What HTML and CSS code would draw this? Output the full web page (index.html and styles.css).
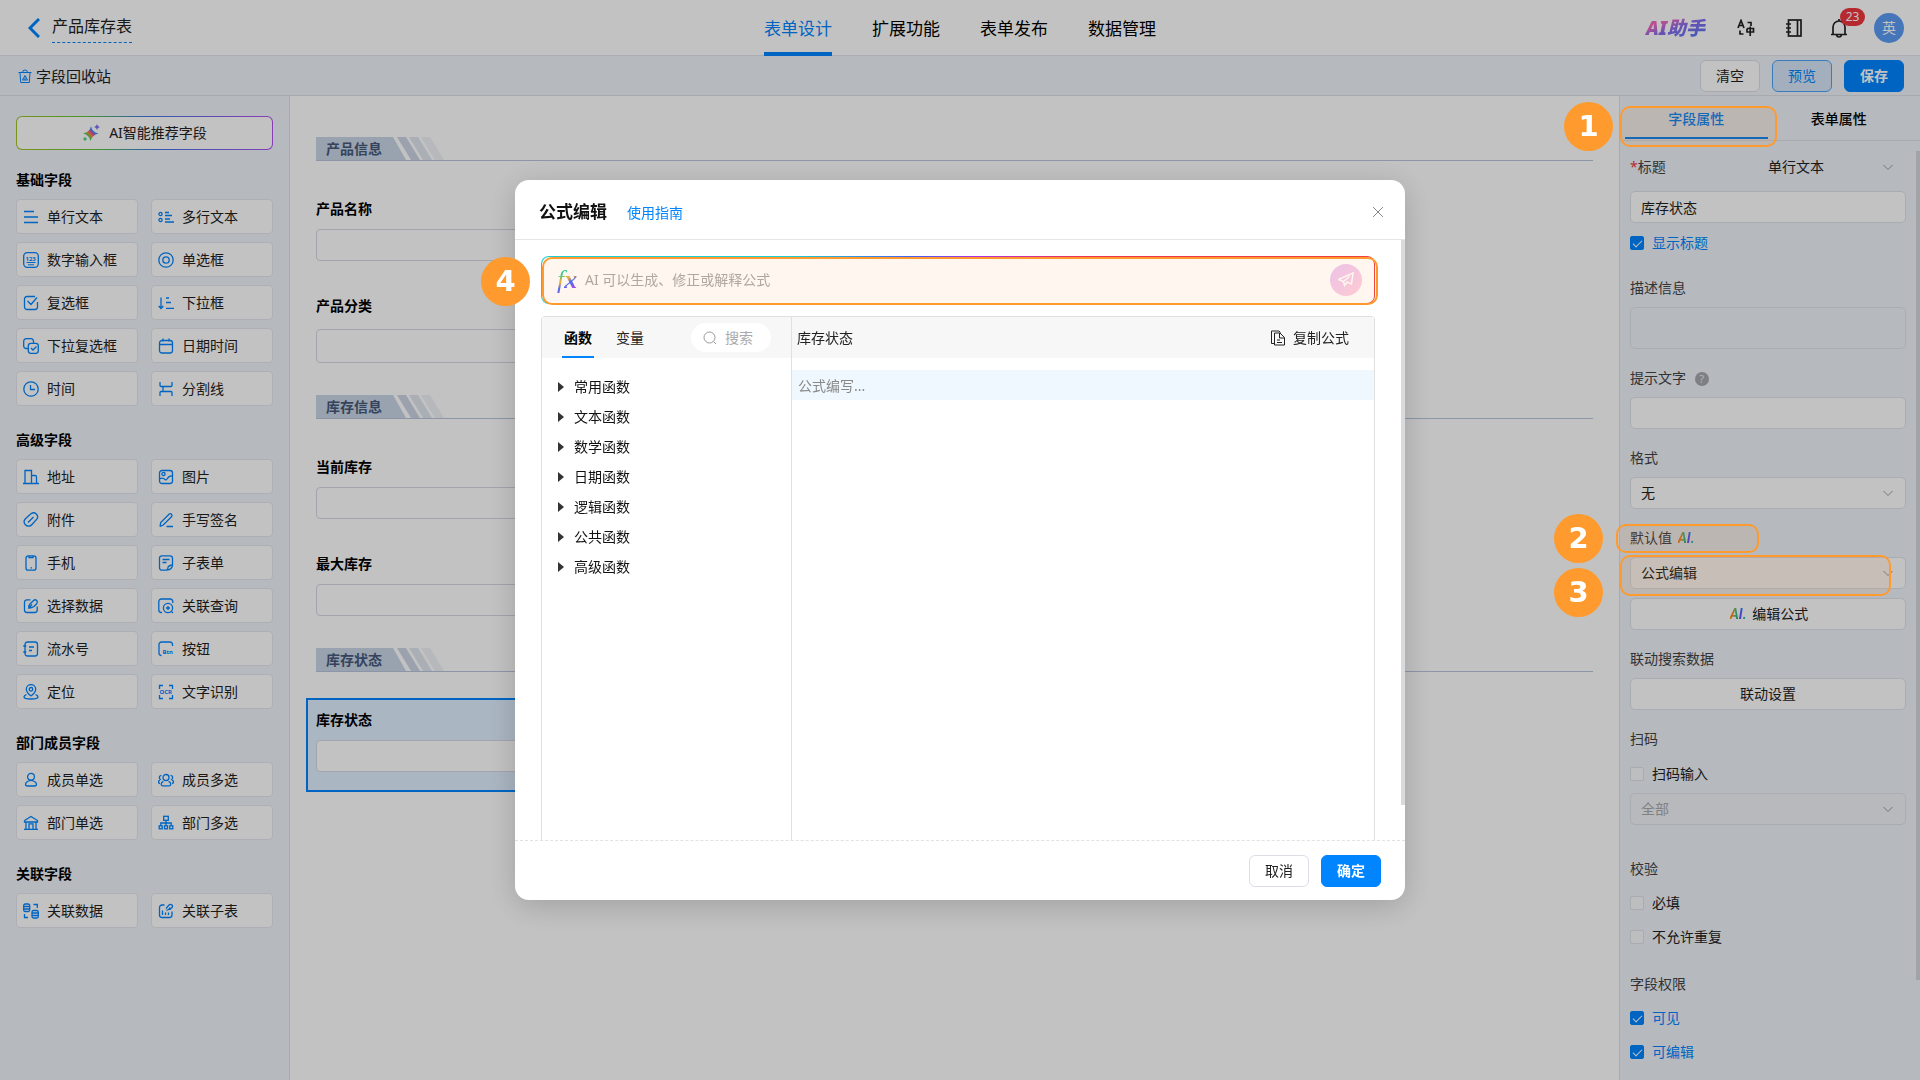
FILE: index.html
```html
<!DOCTYPE html>
<html lang="zh-CN">
<head>
    <meta charset="UTF-8">
    <meta name="viewport" content="width=device-width, initial-scale=1.0">
    <title>产品库存表 - 表单设计</title>
    <link rel="stylesheet" href="styles.css">
</head>
<body>
    <!-- Iconos compartidos -->
    <svg class="sprite" aria-hidden="true">
        <defs>
            <linearGradient id="rainbow" x1="0" y1="1" x2="1" y2="0">
                <stop offset="0" stop-color="#3ecf6b"/><stop offset=".3" stop-color="#3ecf6b"/><stop offset=".42" stop-color="#ff8a3c"/>
                <stop offset=".5" stop-color="#f0508c"/><stop offset=".6" stop-color="#3b8cff"/><stop offset="1" stop-color="#b05cf0"/>
            </linearGradient>
            <symbol id="i-line" viewBox="0 0 16 16"><path d="M1 2.5h10M1 8h14M1 13.5h14"/></symbol>
            <symbol id="i-multi" viewBox="0 0 16 16"><circle cx="2.5" cy="5" r="1.6"/><circle cx="2.5" cy="11" r="1.6"/><path d="M7 3.5h4M7 6.500h7M7 10h5M7 13h9"/></symbol>
            <symbol id="i-number" viewBox="0 0 16 16"><rect x=".7" y=".7" width="14.600" height="14.600" rx="3.500"/><text x="2.500" y="9" class="icon-text">123</text><path d="M3.500 10.500h9M5 12.800h6" stroke-width="1"/></symbol>
            <symbol id="i-radio" viewBox="0 0 16 16"><circle cx="8" cy="8" r="7.200"/><circle cx="8" cy="8" r="3.200"/></symbol>
            <symbol id="i-check" viewBox="0 0 16 16"><path d="M14.500 7v5a2.500 2.500 0 0 1-2.500 2.500H4A2.500 2.500 0 0 1 1.500 12V4A2.500 2.500 0 0 1 4 1.500h8M4.500 6l3.500 3.500 6-7"/></symbol>
            <symbol id="i-drop" viewBox="0 0 16 16"><path d="M3 2.500v11M.7 11L3 13.500 5.300 11M8 3h3M8 7.500h5M8 13.300h8"/></symbol>
            <symbol id="i-multicheck" viewBox="0 0 16 16"><path d="M5 10.500H3.200A2.500 2.500 0 0 1 .7 8V3.200A2.500 2.500 0 0 1 3.200.7H8a2.500 2.500 0 0 1 2.500 2.500V5"/><rect x="5.300" y="5.300" width="10" height="10" rx="2.500"/><path d="M8 10l2 2 3.500-3.500"/></symbol>
            <symbol id="i-date" viewBox="0 0 16 16"><rect x="1.500" y="2.500" width="13" height="12.500" rx="2.500"/><path d="M1.500 6.500h13M5 .5v3M11 .5v3"/></symbol>
            <symbol id="i-time" viewBox="0 0 16 16"><circle cx="8" cy="8" r="7.200"/><path d="M7.500 4v4.500H12"/></symbol>
            <symbol id="i-split" viewBox="0 0 16 16"><path d="M2 1v3.500q0 1 1 1h10q1 0 1-1V1M2 15v-3.500q0-1 1-1h10q1 0 1 1V15M5 5.500v5"/></symbol>
            <symbol id="i-address" viewBox="0 0 16 16"><path d="M0 14.500h16M2 14.500v-13h6.500v13M8.500 6.500H12q1.500 0 1.500 1.500v6.500"/></symbol>
            <symbol id="i-image" viewBox="0 0 16 16"><rect x="1.500" y="1.500" width="13" height="13" rx="2.500"/><circle cx="5.500" cy="5" r="1.600"/><path d="M1.500 10q3-2 5.500.5 1 1 2-.5 2-3.500 5.500-3"/></symbol>
            <symbol id="i-clip" viewBox="0 0 16 16"><path d="M6.500 3L8 1.800a4 4 0 0 1 5.800 5.400L9 12.500a4.300 4.300 0 0 1-6.800 0 4.300 4.300 0 0 1 0-5.500L6.500 3M5 10.500L10.500 5"/></symbol>
            <symbol id="i-sign" viewBox="0 0 16 16"><path d="M2 14.500l.7-4L11 2.200q1.300-1.100 2.500.1 1.100 1.200 0 2.500L5.200 13 2 14.500M8.500 14.500h6.500"/></symbol>
            <symbol id="i-phone" viewBox="0 0 16 16"><rect x="3" y=".8" width="10" height="14.400" rx="2.200"/><path d="M6 1v1.500h4V1M7.500 12.800h1.500"/></symbol>
            <symbol id="i-sub" viewBox="0 0 16 16"><path d="M8.500 15.200H4A2.500 2.500 0 0 1 1.500 12.700V3.300A2.500 2.500 0 0 1 4 .8h8a2.500 2.500 0 0 1 2.500 2.500V10q0 4.500-6 5.200 1.800-1 1.500-3 .5-1.700 4.500-2.200M4.500 4.500h7M4.500 7.500h4"/></symbol>
            <symbol id="i-pick" viewBox="0 0 16 16"><path d="M7.500 1.800H4A2.500 2.500 0 0 0 1.500 4.300V12A2.500 2.500 0 0 0 4 14.500h7.700a2.500 2.500 0 0 0 2.500-2.500V8.500M6 10q-1-2 1-4l3.500-3.500q1.700-1.400 3.200 0 1.400 1.600 0 3.200L11 8.500Q9 10 6 10l3-3.500"/></symbol>
            <symbol id="i-query" viewBox="0 0 16 16"><path d="M4 14.500H3.300A2.500 2.500 0 0 1 .8 12V3.500A2.500 2.500 0 0 1 3.300 1h9a2.500 2.500 0 0 1 2.500 2.500V5"/><circle cx="10" cy="10" r="4.600"/><path d="M8 10h4M10 8v4M13.500 13.500l1.500 1.500"/></symbol>
            <symbol id="i-serial" viewBox="0 0 16 16"><rect x="2" y="1" width="12.500" height="14" rx="2.500"/><path d="M.3 5h3M.3 11h3M6 6h5M6 9.500h3"/></symbol>
            <symbol id="i-button" viewBox="0 0 16 16"><path d="M3.500 14.500A2.500 2.500 0 0 1 1 12V3.500A2.500 2.500 0 0 1 3.500 1H12a2.500 2.500 0 0 1 2.500 2.500V5"/><text x="4.500" y="13" class="icon-text">Btn</text></symbol>
            <symbol id="i-pin" viewBox="0 0 16 16"><path d="M8 12Q3.300 8.500 3.300 5.300a4.700 4.700 0 0 1 9.400 0Q12.700 8.500 8 12"/><circle cx="8" cy="5.300" r="1.800"/><path d="M3.500 10.500Q1 11.500 1 13q0 2 7 2t7-2q0-1.500-2.500-2.500"/></symbol>
            <symbol id="i-ocr" viewBox="0 0 16 16"><path d="M1.500 5V1.500H5M11 1.500h3.500V5M1.500 11v3.500H5M11 14.500h3.500V11"/><text x="1.500" y="10.300" class="icon-text">OCR</text></symbol>
            <symbol id="i-user" viewBox="0 0 16 16"><circle cx="8" cy="4.800" r="3.400"/><path d="M5.500 9q-3 1.200-3 3.200 0 1.800 2 1.800h7q2 0 2-1.800 0-2-3-3.200-2.500-1.200-5 0"/></symbol>
            <symbol id="i-users" viewBox="0 0 16 16"><circle cx="8" cy="5.500" r="3"/><path d="M5.500 9.300q-2.500 1-2.300 3 .2 1.500 1.800 1.500h6q1.600 0 1.800-1.500.2-2-2.300-3M3.500 3.300q-2.500.3-2 3 .2.800.8 1.200Q.3 8.700.5 10.500q.2 1 1.500 1M12.500 3.300q2.500.3 2 3-.2.800-.8 1.200 2 1.200 1.800 3-.2 1-1.500 1"/></symbol>
            <symbol id="i-dept" viewBox="0 0 16 16"><path d="M1.500 5.500L8 1.500l6.500 4V7h-13V5.500M3 7v7M13 7v7M1 14.300h14M6 14V8.800h4V14"/></symbol>
            <symbol id="i-depts" viewBox="0 0 16 16"><rect x="5.700" y="1.300" width="4.600" height="4"/><path d="M8 5.500v5M2.800 10.500V8h10.400v2.500"/><rect x="1.200" y="10.800" width="3" height="3"/><rect x="6.500" y="10.800" width="3" height="3"/><rect x="11.800" y="10.800" width="3" height="3"/></symbol>
            <symbol id="i-link" viewBox="0 0 16 16"><rect x=".7" y="1" width="6" height="7.500" rx="1.500"/><path d="M.7 3.500h6M.7 6h6"/><rect x="9" y="7.500" width="6.300" height="7.500" rx="1.500"/><path d="M9 10h6.300M9 12.500h6.300M10.500 1.500h3.800V5M1.500 11v3.500H5"/></symbol>
            <symbol id="i-linksub" viewBox="0 0 16 16"><path d="M6.500 2H4A2.500 2.500 0 0 0 1.500 4.500V12A2.500 2.500 0 0 0 4 14.500h7.500A2.500 2.500 0 0 0 14 12V8.500M4.500 7.500V12M7.500 9.500V12M10.500 9.500V12M8 5.500l3-3.500q1.500-1.300 3 0 1 1.200 0 2.500l-2.500 2.300M8.500 7q2 .5 3.500-2.500"/></symbol>
            <symbol id="i-down" viewBox="0 0 12 12"><path d="M1.500 4L6 8.500 10.500 4"/></symbol>
        </defs>
    </svg>

    <header class="topbar">
        <div class="topbar-left">
            <a href="#" class="back" aria-label="返回"><svg width="12" height="20" viewBox="0 0 12 20"><path d="M11 1L2 10l9 9"/></svg></a>
            <span class="form-name">产品库存表</span>
        </div>
        <nav class="topnav">
            <a href="#" class="active">表单设计</a>
            <a href="#">扩展功能</a>
            <a href="#">表单发布</a>
            <a href="#">数据管理</a>
        </nav>
        <div class="topbar-right">
            <a href="#" class="ai-helper">AI助手</a>
            <button class="icon-btn" aria-label="语言">
                <svg width="18" height="18" viewBox="0 0 18 18"><path d="M1 9l3-7.500L7 9M2 6.500h4M10.500 3.500H14V7M3 11.500V15h3.500M10 9.500h6.500V13H10V9.500M13.200 7.500V17"/></svg>
            </button>
            <button class="icon-btn" aria-label="通讯录">
                <svg width="18" height="18" viewBox="0 0 18 18"><rect x="3.500" y="1" width="12.500" height="16"/><path d="M12.500 1v16M1 5h5M1 9h5M1 13h5"/></svg>
            </button>
            <button class="icon-btn bell" aria-label="通知">
                <svg width="18" height="20" viewBox="0 0 18 20"><path d="M1 16.500h16M3 16.500V9a6 6 0 0 1 12 0v7.500M9 1v2M6.500 17q.5 2 2.500 2t2.500-2"/></svg>
                <span class="badge">23</span>
            </button>
            <span class="avatar">英</span>
        </div>
    </header>

    <div class="toolbar">
        <a href="#" class="recycle">
            <svg width="14" height="14" viewBox="0 0 14 14"><path d="M.5 3.500h13M4.500 3.500q0-2.500 2.500-2.500t2.500 2.500M2 3.500l.7 10h8.600l.7-10M4.500 11L7 6.500 9.500 11h-5M7 8.500V11"/></svg>
            字段回收站
        </a>
        <div class="toolbar-actions">
            <button class="btn">清空</button>
            <button class="btn btn-light">预览</button>
            <button class="btn btn-primary">保存</button>
        </div>
    </div>

    <main class="workspace">
        <aside class="sidebar">
            <button class="ai-recommend">
                <svg width="18" height="18" viewBox="0 0 18 18"><path d="M9 2q1 6 7.500 7.500Q10 11 8.500 17 7.500 11 1 9.500 8 8 9 2M15 0q.4 2.600 3 3-2.600.4-3 3-.4-2.600-3-3 2.600-.4 3-3M3 12.500q.3 2.200 2.500 2.500-2.200.3-2.500 2.500Q2.700 15.300.5 15q2.200-.3 2.500-2.500"/></svg>
                AI智能推荐字段
            </button>

            <h2>基础字段</h2>
            <div class="cards">
                <button class="card"><svg><use href="#i-line"/></svg>单行文本</button>
                <button class="card"><svg><use href="#i-multi"/></svg>多行文本</button>
                <button class="card"><svg><use href="#i-number"/></svg>数字输入框</button>
                <button class="card"><svg><use href="#i-radio"/></svg>单选框</button>
                <button class="card"><svg><use href="#i-check"/></svg>复选框</button>
                <button class="card"><svg><use href="#i-drop"/></svg>下拉框</button>
                <button class="card"><svg><use href="#i-multicheck"/></svg>下拉复选框</button>
                <button class="card"><svg><use href="#i-date"/></svg>日期时间</button>
                <button class="card"><svg><use href="#i-time"/></svg>时间</button>
                <button class="card"><svg><use href="#i-split"/></svg>分割线</button>
            </div>

            <h2>高级字段</h2>
            <div class="cards">
                <button class="card"><svg><use href="#i-address"/></svg>地址</button>
                <button class="card"><svg><use href="#i-image"/></svg>图片</button>
                <button class="card"><svg><use href="#i-clip"/></svg>附件</button>
                <button class="card"><svg><use href="#i-sign"/></svg>手写签名</button>
                <button class="card"><svg><use href="#i-phone"/></svg>手机</button>
                <button class="card"><svg><use href="#i-sub"/></svg>子表单</button>
                <button class="card"><svg><use href="#i-pick"/></svg>选择数据</button>
                <button class="card"><svg><use href="#i-query"/></svg>关联查询</button>
                <button class="card"><svg><use href="#i-serial"/></svg>流水号</button>
                <button class="card"><svg><use href="#i-button"/></svg>按钮</button>
                <button class="card"><svg><use href="#i-pin"/></svg>定位</button>
                <button class="card"><svg><use href="#i-ocr"/></svg>文字识别</button>
            </div>

            <h2>部门成员字段</h2>
            <div class="cards">
                <button class="card"><svg><use href="#i-user"/></svg>成员单选</button>
                <button class="card"><svg><use href="#i-users"/></svg>成员多选</button>
                <button class="card"><svg><use href="#i-dept"/></svg>部门单选</button>
                <button class="card"><svg><use href="#i-depts"/></svg>部门多选</button>
            </div>

            <h2>关联字段</h2>
            <div class="cards">
                <button class="card"><svg><use href="#i-link"/></svg>关联数据</button>
                <button class="card"><svg><use href="#i-linksub"/></svg>关联子表</button>
            </div>
        </aside>

        <section class="canvas">
            <div class="section-head"><span>产品信息</span><i></i><i></i><i></i></div>
            <div class="field">
                <label for="f-name">产品名称</label>
                <input type="text" id="f-name">
            </div>
            <div class="field field-select">
                <label for="f-type">产品分类</label>
                <select id="f-type"><option></option></select>
            </div>

            <div class="section-head"><span>库存信息</span><i></i><i></i><i></i></div>
            <div class="field">
                <label for="f-stock">当前库存</label>
                <input type="text" id="f-stock">
            </div>
            <div class="field">
                <label for="f-max">最大库存</label>
                <input type="text" id="f-max">
            </div>

            <div class="section-head"><span>库存状态</span><i></i><i></i><i></i></div>
            <div class="field selected">
                <label for="f-status">库存状态</label>
                <input type="text" id="f-status">
            </div>
        </section>

        <aside class="props">
            <div class="props-tabs">
                <button class="active">字段属性</button>
                <button>表单属性</button>
            </div>
            <div class="props-body">
                <div class="prop prop-title">
                    <div class="title-row">
                        <label for="p-title"><em>*</em>标题</label>
                        <div class="select plain">
                            <select aria-label="字段类型"><option>单行文本</option></select>
                            <svg><use href="#i-down"/></svg>
                        </div>
                    </div>
                    <input type="text" id="p-title" value="库存状态">
                    <label class="tick"><input type="checkbox" checked>显示标题</label>
                </div>
                <div class="prop">
                    <label for="p-desc">描述信息</label>
                    <textarea id="p-desc"></textarea>
                </div>
                <div class="prop">
                    <label for="p-tip">提示文字 <span class="help">?</span></label>
                    <input type="text" id="p-tip">
                </div>
                <div class="prop">
                    <label for="p-format">格式</label>
                    <div class="select">
                        <select id="p-format"><option>无</option></select>
                        <svg><use href="#i-down"/></svg>
                    </div>
                </div>
                <div class="prop">
                    <label for="p-default">默认值 <span class="ai-mark">AI.</span></label>
                    <div class="select">
                        <select id="p-default"><option>公式编辑</option></select>
                        <svg><use href="#i-down"/></svg>
                    </div>
                    <button class="wide-btn"><span class="ai-mark">AI.</span> 编辑公式</button>
                </div>
                <div class="prop">
                    <span>联动搜索数据</span>
                    <button class="wide-btn">联动设置</button>
                </div>
                <div class="prop prop-scan">
                    <span>扫码</span>
                    <label class="tick"><input type="checkbox">扫码输入</label>
                    <div class="select disabled">
                        <select aria-label="扫码范围" disabled><option>全部</option></select>
                        <svg><use href="#i-down"/></svg>
                    </div>
                </div>
                <div class="prop prop-ticks">
                    <span>校验</span>
                    <label class="tick"><input type="checkbox">必填</label>
                    <label class="tick"><input type="checkbox">不允许重复</label>
                </div>
                <div class="prop prop-ticks">
                    <span>字段权限</span>
                    <label class="tick"><input type="checkbox" checked>可见</label>
                    <label class="tick"><input type="checkbox" checked>可编辑</label>
                </div>
            </div>
            <div class="props-scroll"></div>
        </aside>
    </main>

    <!-- Modal de edición de fórmula -->
    <div class="mask">
        <div class="modal" role="dialog" aria-label="公式编辑">
            <div class="modal-head">
                <h1>公式编辑</h1>
                <a href="#">使用指南</a>
                <button class="close" aria-label="关闭"><svg width="12" height="12" viewBox="0 0 12 12"><path d="M1 1l10 10M11 1L1 11"/></svg></button>
            </div>
            <div class="modal-body">
                <div class="ai-bar">
                    <span class="fx">f<b>x</b></span>
                    <input type="text" aria-label="AI 公式" placeholder="AI 可以生成、修正或解释公式">
                    <button class="send" aria-label="发送"><svg width="18" height="18" viewBox="0 0 18 18"><path d="M1.500 8.500L16 2l-1.500 11-4.500-2-2.500 3.500-1-4-5-2M6.500 10.500l6-5"/></svg></button>
                    <span class="mark mark-4"></span>
                </div>
                <div class="editor">
                    <div class="functions">
                        <div class="functions-head">
                            <button class="active">函数</button>
                            <button>变量</button>
                            <label class="search">
                                <svg width="14" height="14" viewBox="0 0 14 14"><circle cx="6.500" cy="6.500" r="5.500"/><path d="M10.500 10.500L13 13"/></svg>
                                <input type="text" placeholder="搜索" aria-label="搜索">
                            </label>
                        </div>
                        <ul>
                            <li>常用函数</li>
                            <li>文本函数</li>
                            <li>数学函数</li>
                            <li>日期函数</li>
                            <li>逻辑函数</li>
                            <li>公共函数</li>
                            <li>高级函数</li>
                        </ul>
                    </div>
                    <div class="code">
                        <div class="code-head">
                            <span>库存状态</span>
                            <button class="copy"><svg width="16" height="16" viewBox="0 0 16 16"><path d="M4 13.500H1.500V1H9l1.500 1.500M4.500 3H10l4.500 4.500V15h-10V3M9.500 3v5h5M7 10h3M7 12.500h5"/></svg>复制公式</button>
                        </div>
                        <input type="text" class="code-line" placeholder="公式编写..." aria-label="公式">
                    </div>
                </div>
                <div class="modal-scroll"></div>
            </div>
            <div class="modal-foot">
                <button class="btn">取消</button>
                <button class="btn btn-primary">确定</button>
            </div>
            <span class="step step-4">4</span>
        </div>
    </div>

    <!-- Pasos de la guía -->
    <div class="guide">
        <span class="mark mark-1"></span><span class="step step-1">1</span>
        <span class="mark mark-2"></span><span class="step step-2">2</span>
        <span class="mark mark-3"></span><span class="step step-3">3</span>
    </div>
</body>
</html>
```
FILE: styles.css
```css
* {
    box-sizing: border-box;
}
body {
    margin: 0;
    height: 100vh;
    display: flex;
    flex-direction: column;
    overflow: hidden;
    font-family: "Noto Sans", "Noto Sans CJK SC", sans-serif;
    font-size: 14px;
    line-height: 20px;
    color: #222;
    background-color: #fff;
}
a {
    color: inherit;
    text-decoration: none;
}
button, input, select, textarea {
    font: inherit;
    color: inherit;
    margin: 0;
    padding: 0;
    border: none;
    background: none;
    outline: none;
}
button {
    cursor: pointer;
}
svg {
    fill: none;
    stroke: currentColor;
    flex: none;
}
.sprite {
    position: absolute;
    width: 0;
    height: 0;
}

/* Cabecera */
.topbar {
    height: 56px;
    flex: none;
    display: grid;
    grid-template-columns: 1fr auto 1fr;
    border-bottom: 1px solid #e1e4ea;
}
.topbar-left {
    display: flex;
    align-items: center;
    gap: 12px;
    padding-left: 28px;
}
.back {
    display: flex;
    color: #0085ff;
}
.back svg {
    stroke-width: 3;
}
.form-name {
    padding-bottom: 3px;
    font-size: 16px;
    line-height: 26px;
    border-bottom: 1px dashed #0085ff;
}
.topnav {
    display: flex;
    gap: 40px;
    font-size: 17px;
    color: #000;
}
.topnav a {
    height: 56px;
    line-height: 58px;
}
.topnav .active {
    color: #0085ff;
    border-bottom: 4px solid #0085ff;
}
.topbar-right {
    display: flex;
    align-items: center;
    justify-content: flex-end;
    padding-right: 16px;
}
.ai-helper {
    margin-right: 30px;
    padding: 0 2px;
    font-size: 19px;
    font-weight: 900;
    font-style: italic;
    background: linear-gradient(160deg, #f06ac0 25%, #8a6cf0 50%, #5078f0);
    -webkit-background-clip: text;
    background-clip: text;
    color: transparent;
}
.icon-btn {
    position: relative;
    display: flex;
    margin-right: 30px;
}
.icon-btn svg {
    stroke-width: 1.700;
}
.icon-btn.bell {
    margin: 0 26px 0 -3px;
}
.badge {
    position: absolute;
    left: 10px;
    top: -10px;
    width: 25px;
    border-radius: 9px;
    background-color: #f0383e;
    color: #fff;
    font-size: 12px;
    line-height: 18px;
    text-align: center;
}
.avatar {
    width: 30px;
    border-radius: 50%;
    background-color: #5c9cf5;
    color: #fff;
    text-align: center;
    line-height: 30px;
}

/* Barra de acciones */
.toolbar {
    height: 40px;
    flex: none;
    display: flex;
    align-items: center;
    justify-content: space-between;
    padding: 0 16px;
    background-color: #eff3fa;
    border-bottom: 1px solid #dde0e8;
}
.recycle {
    display: flex;
    align-items: center;
    gap: 4px;
    padding-left: 2px;
    font-size: 15px;
}
.recycle svg {
    color: #0085ff;
}
.toolbar-actions {
    display: flex;
    gap: 12px;
}
.btn {
    width: 60px;
    height: 32px;
    border: 1px solid #dcdee6;
    border-radius: 6px;
    background-color: #fff;
}
.btn-light {
    color: #0085ff;
    border-color: #4aa5fa;
    background-color: #d6e6f7;
}
.btn-primary {
    color: #fff;
    font-weight: 700;
    border-color: #0085ff;
    background-color: #0085ff;
}
.workspace {
    flex: 1;
    min-height: 0;
    display: flex;
}

/* Campos disponibles */
.sidebar {
    width: 290px;
    flex: none;
    padding: 20px 16px;
    background-color: #eff3fa;
    border-right: 1px solid #dde0e8;
}
.ai-recommend {
    width: 100%;
    height: 34px;
    display: flex;
    align-items: center;
    justify-content: center;
    gap: 9px;
    border: 1px solid transparent;
    border-radius: 6px;
    background: linear-gradient(#fff, #fff) padding-box, linear-gradient(75deg, #a5c322, #5ec43c 30%, #3f78e8 52%, #b84ff0) border-box;
}
.ai-recommend svg {
    fill: url(#rainbow);
    stroke: none;
}
.sidebar h2 {
    margin: 24px 0 9px;
    font-size: 14px;
    font-weight: 700;
    line-height: 20px;
    color: #000;
}
.sidebar .ai-recommend + h2 {
    margin-top: 20px;
}
.cards {
    display: grid;
    grid-template-columns: 1fr 1fr;
    gap: 8px 13px;
}
.card {
    height: 35px;
    display: flex;
    align-items: center;
    gap: 8px;
    padding-left: 6px;
    border: 1px solid #e4e7ee;
    border-radius: 4px;
    background-color: #fff;
    white-space: nowrap;
}
.card svg {
    width: 16px;
    height: 16px;
    color: #0085ff;
    stroke-width: 1.3;
}
.icon-text {
    font-size: 6px;
    font-weight: 700;
    fill: #0085ff;
    stroke: none;
}

/* Lienzo */
.canvas {
    flex: 1;
    min-width: 0;
    padding: 29px 26px;
}
.section-head {
    height: 24px;
    margin: 12px 0 26px;
    display: flex;
    border-bottom: 1px solid #b9c6dc;
}
.section-head span {
    width: 90px;
    padding-left: 10px;
    font-weight: 700;
    line-height: 23px;
    color: #47597a;
    background-color: #c9d5e6;
    clip-path: polygon(0 0, 77px 0, 100% 100%, 0 100%);
}
.section-head i {
    width: 23px;
    margin-left: -9px;
    background-color: #ccd5e4;
    clip-path: polygon(0 0, 9px 0, 100% 100%, 14px 100%);
}
.section-head i + i {
    margin-left: -11px;
    opacity: .6;
}
.section-head i + i + i {
    opacity: .3;
}
.field {
    width: 50%;
    display: flex;
    flex-direction: column;
    gap: 9px;
    margin: 0 -10px 3px;
    padding: 9px 8px 18px;
    border: 2px solid transparent;
}
.field label {
    font-weight: 700;
    line-height: 22px;
    color: #000;
}
.field input, .field select {
    height: 32px;
    border: 1px solid #d6d9e3;
    border-radius: 4px;
    background-color: #fff;
    appearance: none;
}
.field-select {
    gap: 12px;
    margin-bottom: 0;
}
.field-select select {
    height: 34px;
}
.field.selected {
    border-color: #0085ff;
    background-color: #e0efff;
}

/* Propiedades */
.props {
    position: relative;
    width: 301px;
    flex: none;
    background-color: #eff3fa;
    border-left: 1px solid #dde0e8;
}
.props-tabs {
    display: flex;
    padding: 0 10px 0 5px;
    height: 45px;
    border-bottom: 1px solid #dde0e8;
}
.props-tabs button {
    flex: 1;
    height: 43px;
    padding-top: 4px;
    border-bottom: 2px solid transparent;
    font-weight: 500;
    color: #000;
}
.props-tabs .active {
    color: #0085ff;
    border-color: #0085ff;
}
.props-body {
    padding: 16px 14px 0 10px;
}
.prop {
    display: flex;
    flex-direction: column;
    gap: 9px;
    margin-bottom: 19px;
    color: #444;
}
.prop input[type="text"], .prop textarea, .prop .select, .wide-btn {
    width: 100%;
    height: 32px;
    padding: 0 10px;
    border: 1px solid #e0e3eb;
    border-radius: 5px;
    background-color: #fff;
    color: #222;
}
.prop textarea {
    height: 42px;
    background-color: #eff3fa;
    resize: none;
}
.prop .select {
    display: flex;
    align-items: center;
    padding-right: 11px;
}
.select select {
    flex: 1;
    appearance: none;
    opacity: 1;
}
.select svg {
    width: 12px;
    height: 12px;
    color: #999;
}
.prop .select.plain {
    width: 138px;
    height: 20px;
    padding: 0 12px 0 0;
    border: none;
    background: none;
}
.prop .select.disabled {
    background-color: #f1f4f9;
    color: #aaa;
}
.title-row {
    display: flex;
    justify-content: space-between;
}
.title-row em {
    color: #f0383e;
    font-style: normal;
}
.prop-title {
    gap: 14px;
    margin-bottom: 25px;
}
.prop-title .tick {
    margin-top: -4px;
}
.tick {
    display: flex;
    align-items: center;
    gap: 8px;
    color: #222;
}
.tick:has(:checked) {
    color: #0085ff;
}
.tick input {
    position: relative;
    width: 14px;
    height: 14px;
    border: 1px solid #dde1ea;
    border-radius: 2px;
    background-color: #f8fafd;
    appearance: none;
}
.tick input:checked {
    border-color: #0085ff;
    background-color: #0085ff;
}
.tick input:checked::after {
    content: "";
    position: absolute;
    left: 4px;
    top: 1px;
    width: 4px;
    height: 8px;
    border: solid #fff;
    border-width: 0 1px 1px 0;
    transform: rotate(45deg);
}
.help {
    display: inline-block;
    width: 14px;
    margin-left: 5px;
    border-radius: 50%;
    background-color: #a5a8ae;
    color: #e8ebf0;
    font-size: 11px;
    line-height: 14px;
    text-align: center;
}
.ai-mark {
    margin: 0 2px;
    font-family: Roboto, sans-serif;
    font-size: 14px;
    font-weight: 700;
    font-style: italic;
    background: linear-gradient(90deg, #ff8a1e 15%, #2ed47b 35%, #7a2cff 55%, #1ea0ff 75%, #2ed45b);
    -webkit-background-clip: text;
    background-clip: text;
    color: transparent;
}
.prop-scan {
    margin-bottom: 34px;
}
.prop-scan .tick {
    margin-top: 6px;
}
.prop-ticks {
    gap: 14px;
    margin-bottom: 27px;
}
.props-scroll {
    position: absolute;
    right: 0;
    top: 55px;
    width: 4px;
    height: 829px;
    background-color: #d5d7dc;
}

/* Modal */
.mask {
    position: fixed;
    inset: 0;
    display: flex;
    align-items: center;
    justify-content: center;
    background-color: rgba(0, 0, 0, .24);
}
.modal {
    position: relative;
    width: 890px;
    height: 720px;
    display: flex;
    flex-direction: column;
    border-radius: 14px;
    background-color: #fff;
    box-shadow: 0 6px 30px rgba(0, 0, 0, .18);
}
.modal-head {
    height: 60px;
    display: flex;
    align-items: center;
    gap: 20px;
    padding: 4px 21px 0 24px;
    border-bottom: 1px solid #e6e6e6;
}
.modal-head h1 {
    margin: 0;
    font-size: 17px;
    font-weight: 700;
    line-height: 24px;
    color: #111;
}
.modal-head a {
    padding-top: 2px;
    color: #0085ff;
}
.close {
    display: flex;
    margin-left: auto;
    color: #888;
}
.modal-body {
    position: relative;
    flex: 1;
    min-height: 0;
    display: flex;
    flex-direction: column;
    gap: 12px;
    padding: 16px 30px 0 26px;
}
.ai-bar {
    position: relative;
    height: 48px;
    flex: none;
    display: flex;
    align-items: center;
    padding: 0 12px 0 11px;
    border: 1px solid transparent;
    border-radius: 8px;
    background: linear-gradient(#fff, #fff) padding-box, linear-gradient(90deg, #1ccfcf 30%, #4a5cf5 45%, #b030e0 52%, #f03050 65%, #f04040) border-box;
}
.fx {
    width: 32px;
    padding-left: 4px;
    font-family: "Liberation Serif", serif;
    font-size: 26px;
    line-height: 32px;
    font-style: italic;
    background: radial-gradient(circle at 3px 17px, #2ea0e8 1px, transparent 2px), linear-gradient(150deg, #2ecf9b 30%, #ffb030 45%, #3b6cff 55%, #b040f0 75%);
    -webkit-background-clip: text;
    background-clip: text;
    color: transparent;
}
.ai-bar input {
    flex: 1;
}
.ai-bar input::placeholder, .search input::placeholder {
    color: #aaa;
}
.send {
    width: 32px;
    height: 32px;
    display: flex;
    align-items: center;
    justify-content: center;
    border-radius: 50%;
    background: linear-gradient(135deg, #eac6f6, #ffcfe2);
    color: #fff;
}
.send svg {
    stroke-width: 1.500;
}
.editor {
    flex: 1;
    display: flex;
    border: 1px solid #e0e0e0;
    border-bottom: none;
    border-radius: 4px 4px 0 0;
}
.functions {
    width: 250px;
    border-right: 1px solid #e0e0e0;
}
.functions-head, .code-head {
    height: 41px;
    display: flex;
    align-items: center;
    background-color: #f7f7f7;
}
.functions-head {
    padding: 0 20px;
    gap: 20px;
}
.functions-head button {
    width: 32px;
    height: 41px;
    padding-top: 2px;
    border-bottom: 2px solid transparent;
}
.functions-head .active {
    font-weight: 700;
    color: #000;
    border-color: #0085ff;
}
.search {
    width: 80px;
    height: 29px;
    display: flex;
    align-items: center;
    gap: 8px;
    margin-left: auto;
    padding: 0 12px;
    border-radius: 15px;
    background-color: #fff;
    color: #999;
}
.search input {
    width: 32px;
}
.functions ul {
    margin: 14px 0 0;
    padding: 0 0 0 16px;
    list-style: none;
    color: #111;
}
.functions li {
    display: flex;
    align-items: center;
    gap: 10px;
    line-height: 30px;
}
.functions li::before {
    content: "";
    border: 5px solid transparent;
    border-left: 6px solid #333;
    border-right: none;
}
.code {
    flex: 1;
}
.code-head {
    justify-content: space-between;
    padding: 0 25px 0 5px;
}
.copy {
    display: flex;
    align-items: center;
    gap: 7px;
}
.code-line {
    width: 100%;
    height: 30px;
    margin-top: 12px;
    padding-left: 6px;
    background-color: #f0f8ff;
}
.code-line::placeholder {
    color: #888;
}
.modal-scroll {
    position: absolute;
    right: 0;
    top: 0;
    width: 4px;
    height: 565px;
    background-color: #d9dadc;
}
.modal-foot {
    height: 60px;
    display: flex;
    align-items: center;
    justify-content: flex-end;
    gap: 12px;
    padding-right: 24px;
    border-top: 1px dashed #e2e2e2;
}

/* Pasos numerados */
.step {
    position: absolute;
    width: 49px;
    height: 49px;
    border-radius: 50%;
    background-color: #ff9a2e;
    color: #fff;
    font: bold 29px/49px "DejaVu Sans", sans-serif;
    text-align: center;
}
.mark {
    position: absolute;
    border: 2px solid #ff9a2e;
    border-radius: 10px;
    background-color: rgba(255, 154, 46, .08);
    pointer-events: none;
}
.guide {
    position: fixed;
    top: 0;
    right: 0;
}
.step-1 {
    right: 307px;
    top: 102px;
}
.step-2 {
    right: 317px;
    top: 514px;
}
.step-3 {
    right: 317px;
    top: 568px;
}
.step-4 {
    left: -34px;
    top: 77px;
}
.mark-1 {
    right: 143px;
    top: 106px;
    width: 157px;
    height: 41px;
}
.mark-2 {
    right: 161px;
    top: 524px;
    width: 143px;
    height: 29px;
}
.mark-3 {
    right: 29px;
    top: 555px;
    width: 271px;
    height: 41px;
}
.mark-4 {
    inset: 0 -4px -2px 0;
}
```
